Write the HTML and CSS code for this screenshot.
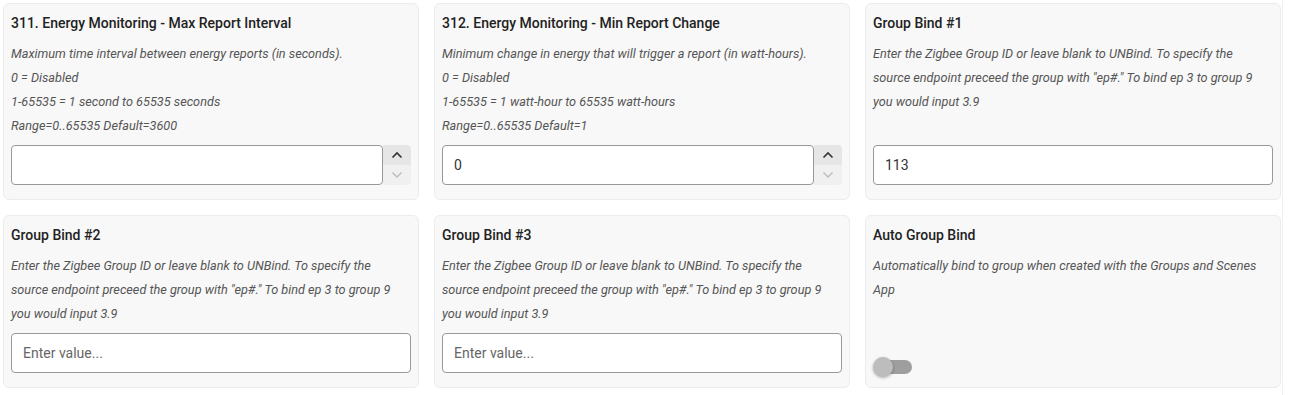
FILE: index.html
```html
<!DOCTYPE html>
<html lang="en">
  <head>
    <meta charset="UTF-8" />
    <meta name="viewport" content="width=device-width, initial-scale=1.0" />
    <title>Device Preferences</title>
    <link rel="stylesheet" href="styles.css">
  </head>
  <body>
    <div class="prefs">
      <div class="card">
        <h3 class="card-title">311. Energy Monitoring - Max Report Interval</h3>
        <p class="desc">Maximum time interval between energy reports (in seconds).</p>
        <p class="desc">0 = Disabled</p>
        <p class="desc">1-65535 = 1 second to 65535 seconds</p>
        <p class="desc">Range=0..65535 Default=3600</p>
        <div class="field-row">
          <input class="field" type="text" value="">
          <div class="spinner">
            <span class="spin-btn up">
              <svg width="12" height="8" viewBox="0 0 12 8"><path d="M1.5 6.5 L6 2 L10.5 6.5" fill="none" stroke="#333" stroke-width="1.6"/></svg>
            </span>
            <span class="spin-btn down">
              <svg width="12" height="8" viewBox="0 0 12 8"><path d="M1.5 1.5 L6 6 L10.5 1.5" fill="none" stroke="#bbb" stroke-width="1.3"/></svg>
            </span>
          </div>
        </div>
      </div>

      <div class="card">
        <h3 class="card-title">312. Energy Monitoring - Min Report Change</h3>
        <p class="desc">Minimum change in energy that will trigger a report (in watt-hours).</p>
        <p class="desc">0 = Disabled</p>
        <p class="desc">1-65535 = 1 watt-hour to 65535 watt-hours</p>
        <p class="desc">Range=0..65535 Default=1</p>
        <div class="field-row">
          <input class="field" type="text" value="0">
          <div class="spinner">
            <span class="spin-btn up">
              <svg width="12" height="8" viewBox="0 0 12 8"><path d="M1.5 6.5 L6 2 L10.5 6.5" fill="none" stroke="#333" stroke-width="1.6"/></svg>
            </span>
            <span class="spin-btn down">
              <svg width="12" height="8" viewBox="0 0 12 8"><path d="M1.5 1.5 L6 6 L10.5 1.5" fill="none" stroke="#bbb" stroke-width="1.3"/></svg>
            </span>
          </div>
        </div>
      </div>

      <div class="card">
        <h3 class="card-title">Group Bind #1</h3>
        <p class="desc">Enter the Zigbee Group ID or leave blank to UNBind. To specify the source endpoint preceed the group with "ep#." To bind ep 3 to group 9 you would input 3.9</p>
        <div class="field-row">
          <input class="field" type="text" value="113">
        </div>
      </div>

      <div class="card">
        <h3 class="card-title">Group Bind #2</h3>
        <p class="desc">Enter the Zigbee Group ID or leave blank to UNBind. To specify the source endpoint preceed the group with "ep#." To bind ep 3 to group 9 you would input 3.9</p>
        <div class="field-row">
          <input class="field" type="text" placeholder="Enter value...">
        </div>
      </div>

      <div class="card">
        <h3 class="card-title">Group Bind #3</h3>
        <p class="desc">Enter the Zigbee Group ID or leave blank to UNBind. To specify the source endpoint preceed the group with "ep#." To bind ep 3 to group 9 you would input 3.9</p>
        <div class="field-row">
          <input class="field" type="text" placeholder="Enter value...">
        </div>
      </div>

      <div class="card">
        <h3 class="card-title">Auto Group Bind</h3>
        <p class="desc">Automatically bind to group when created with the Groups and Scenes App</p>
        <div class="toggle">
          <span class="track"></span>
          <span class="thumb"></span>
        </div>
      </div>
    </div>
  </body>
</html>
```

FILE: styles.css
```css
body{
  margin: 0;
  background: #fff;
  font-family: Roboto, "Liberation Sans", sans-serif;
}
.prefs{
  width: 1279px;
  padding: 3px 0 7px 3px;
  border-right: 1px solid #f0f0f0;
  display: grid;
  grid-template-columns: repeat(3, 416px);
  gap: 15px;
}
.card{
  display: flex;
  flex-direction: column;
  padding: 7px 7px 10px 7px;
  background: #f8f8f8;
  border: 1px solid #ececec;
  border-radius: 6px;
}
.card-title{
  margin: 0 0 8px 0;
  padding-top: 1px;
  height: 22px;
  line-height: 22px;
  font-size: 14px;
  font-weight: 500;
  color: #222;
}
.desc{
  margin: 0;
  padding-right: 10px;
  font-size: 12.7px;
  line-height: 24px;
  font-style: italic;
  color: #555;
}
.field-row{
  display: flex;
  margin-top: auto;
  margin-bottom: 4px;
  padding-top: 7px;
}
.field{
  flex: 1;
  min-width: 0;
  box-sizing: border-box;
  height: 40px;
  padding: 0 11px;
  border: 1px solid #999;
  border-radius: 4px;
  background: #fff;
  font-family: Roboto, "Liberation Sans", sans-serif;
  font-size: 14px;
  color: #333;
  outline: none;
}
.field::placeholder{
  color: #666;
}
.spinner{
  width: 28px;
  display: flex;
  flex-direction: column;
  border-radius: 0 4px 4px 0;
  overflow: hidden;
}
.spin-btn{
  flex: 1;
  display: flex;
  align-items: center;
  justify-content: center;
}
.spin-btn.up{
  background: #e6e6e6;
}
.spin-btn.down{
  background: #f0f0f0;
}
.toggle{
  position: relative;
  width: 40px;
  height: 20px;
  margin-top: auto;
}
.track{
  position: absolute;
  left: 4px;
  top: 3px;
  width: 35px;
  height: 14px;
  border-radius: 7px;
  background: #9e9e9e;
}
.thumb{
  position: absolute;
  left: 0;
  top: 0;
  width: 20px;
  height: 20px;
  border-radius: 50%;
  background: #bdbdbd;
  box-shadow: 0 1px 3px rgba(0,0,0,0.3);
}
```
